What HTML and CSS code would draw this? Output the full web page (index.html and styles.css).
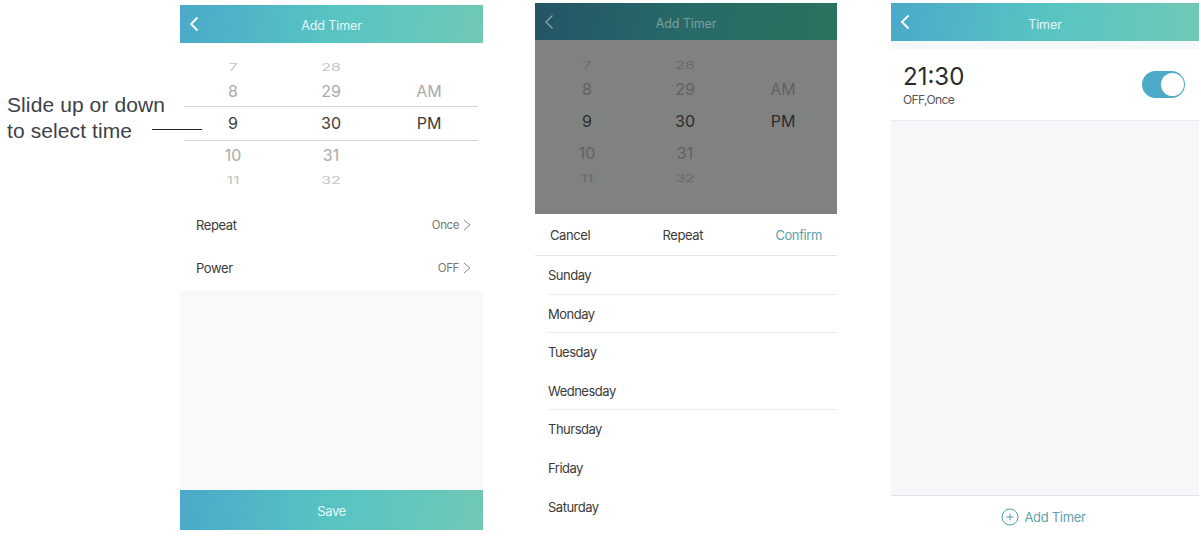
FILE: index.html
```html
<!DOCTYPE html>
<html lang="en">
<head>
  <meta charset="UTF-8">
  <meta name="viewport" content="width=device-width, initial-scale=1.0">
  <title>Timer</title>
  <link rel="stylesheet" href="styles.css">
</head>
<body>
  <div class="guide">
    <div class="note">
      <p class="note-text">Slide up or down<br>to select time</p>
      <span class="note-line"></span>
    </div>

    <!-- Add timer -->
    <div class="phone add">
      <div class="header">
        <svg class="back" viewBox="0 0 10 16"><path d="M8.5 1.5 L2 8 L8.5 14.5"/></svg>
        <span class="title">Add Timer</span>
      </div>
      <div class="picker">
        <div class="picker-row far"><span>7</span><span>28</span><span></span></div>
        <div class="picker-row"><span>8</span><span>29</span><span>AM</span></div>
        <div class="picker-row selected"><span>9</span><span>30</span><span>PM</span></div>
        <div class="picker-row"><span>10</span><span>31</span><span></span></div>
        <div class="picker-row far"><span>11</span><span>32</span><span></span></div>
      </div>
      <div class="setting">
        <span>Repeat</span>
        <span class="value">Once <svg class="next" viewBox="0 0 8 12"><path d="M1 1 L7 6 L1 11"/></svg></span>
      </div>
      <div class="setting">
        <span>Power</span>
        <span class="value">OFF <svg class="next" viewBox="0 0 8 12"><path d="M1 1 L7 6 L1 11"/></svg></span>
      </div>
      <div class="blank"></div>
      <div class="save">Save</div>
    </div>

    <!-- Repeat sheet -->
    <div class="phone repeat">
      <div class="header">
        <svg class="back" viewBox="0 0 10 16"><path d="M8.5 1.5 L2 8 L8.5 14.5"/></svg>
        <span class="title">Add Timer</span>
      </div>
      <div class="picker">
        <div class="picker-row far"><span>7</span><span>28</span><span></span></div>
        <div class="picker-row"><span>8</span><span>29</span><span>AM</span></div>
        <div class="picker-row selected"><span>9</span><span>30</span><span>PM</span></div>
        <div class="picker-row"><span>10</span><span>31</span><span></span></div>
        <div class="picker-row far"><span>11</span><span>32</span><span></span></div>
      </div>
      <div class="sheet-bar">
        <span>Cancel</span>
        <span>Repeat</span>
        <span class="confirm">Confirm</span>
      </div>
      <ul class="days">
        <li class="line">Sunday</li>
        <li class="line">Monday</li>
        <li>Tuesday</li>
        <li class="line">Wednesday</li>
        <li>Thursday</li>
        <li>Friday</li>
        <li>Saturday</li>
      </ul>
    </div>

    <!-- Timer list -->
    <div class="phone list">
      <div class="header">
        <svg class="back" viewBox="0 0 10 16"><path d="M8.5 1.5 L2 8 L8.5 14.5"/></svg>
        <span class="title">Timer</span>
      </div>
      <div class="timer">
        <div>
          <div class="time">21:30</div>
          <div class="detail">OFF,Once</div>
        </div>
        <div class="switch"><div class="knob"></div></div>
      </div>
      <div class="blank"></div>
      <div class="add-timer">
        <svg class="plus" viewBox="0 0 18 18"><circle cx="9" cy="9" r="8"/><path d="M9 5.5 V12.5 M5.5 9 H12.5"/></svg>
        <span>Add Timer</span>
      </div>
    </div>
  </div>
</body>
</html>
```
FILE: styles.css
```css
* {
  box-sizing: border-box;
}
body {
  margin: 0;
  background: #fff;
  font-family: Inter, Roboto, sans-serif;
  font-size: 13px;
  letter-spacing: -0.4px;
  color: #3a3a3a;
}
.guide {
  display: flex;
  align-items: flex-start;
  width: 1201px;
  height: 542px;
  overflow: hidden;
}
.note {
  display: flex;
  width: 180px;
  padding: 92px 0 0 7px;
}
.note-text {
  flex: none;
  width: 145px;
  margin: 0;
  font-family: "Liberation Sans", Arial, sans-serif;
  font-size: 21px;
  line-height: 26px;
  letter-spacing: 0.1px;
  color: #3d4248;
  white-space: nowrap;
}
.note-line {
  flex: none;
  width: 50px;
  height: 1px;
  margin-top: 37px;
  background: #222;
}
.phone {
  display: flex;
  flex-direction: column;
  flex: none;
}
.add {
  width: 303px;
  height: 525px;
  margin-top: 5px;
}
.repeat {
  width: 302px;
  margin: 3px 0 0 52px;
}
.list {
  width: 308px;
  height: 535px;
  margin: 3px 0 0 54px;
}
.header {
  display: flex;
  align-items: center;
  height: 38px;
  padding: 0 9px;
  background: linear-gradient(100deg, #4aa9c9, #57c4c3 50%, #70c8b5);
  color: #e6f7f7;
}
.title {
  flex: 1;
  margin-right: 10px;
  padding-top: 2px;
  text-align: center;
  font-size: 12.5px;
  letter-spacing: -0.1px;
}
.back {
  width: 10px;
  height: 16px;
  fill: none;
  stroke: #fff;
  stroke-width: 1.8;
}
.picker {
  height: 162px;
  padding: 14px 5px 0 4px;
}
.picker-row {
  display: grid;
  grid-template-columns: repeat(3, 98px);
  align-items: center;
  height: 29px;
  padding-bottom: 1px;
  text-align: center;
  font-size: 16px;
  letter-spacing: 0;
  color: #aaa;
}
.picker-row.far {
  height: 20px;
  color: #c4c4c4;
}
.picker-row.far span {
  transform: scaleY(0.65);
}
.picker-row.selected {
  height: 35px;
  border-top: 1px solid #d4d4d4;
  border-bottom: 1px solid #d4d4d4;
  color: #3c3c3c;
}
.setting {
  display: flex;
  justify-content: space-between;
  align-items: center;
  height: 43px;
  padding: 0 12px 3px 16px;
}
.value {
  display: flex;
  align-items: center;
  gap: 4px;
  font-size: 11.5px;
  color: #777;
}
.next {
  width: 8px;
  height: 12px;
  fill: none;
  stroke: #888;
}
.blank {
  flex: 1;
  background: #f8faf9;
}
.save {
  height: 40px;
  line-height: 42px;
  background: linear-gradient(100deg, #4aa9c9, #57c4c3 50%, #70c8b5);
  color: #e6f7f7;
  text-align: center;
}

/* picker screen dimmed behind the sheet */
.repeat .header {
  height: 37px;
  background: linear-gradient(100deg, #245467, #276a67 50%, #2b725f);
  color: #7f9d9b;
}
.repeat .title {
  padding-top: 4px;
}
.repeat .back {
  stroke: #8ea5a5;
  stroke-width: 1.3;
}
.repeat .picker {
  height: 174px;
  padding: 15px 5px 0 3px;
  background: #808281;
}
.repeat .picker-row {
  color: #606161;
}
.repeat .picker-row.far {
  color: #686969;
}
.repeat .picker-row.selected {
  border-color: transparent;
  color: #2c2c2c;
}
.sheet-bar {
  display: flex;
  justify-content: space-between;
  align-items: center;
  height: 42px;
  padding: 0 15px;
  border-bottom: 1px solid #e3e3e3;
}
.confirm {
  color: #5a9fa8;
}
.days {
  margin: 0;
  padding: 0 0 0 13px;
  list-style: none;
  letter-spacing: -0.5px;
}
.days li {
  height: 38.6px;
  line-height: 38px;
  border-bottom: 1px solid transparent;
}
.days .line {
  border-color: #ececec;
}

.list .title {
  padding-top: 4px;
}
.timer {
  display: flex;
  justify-content: space-between;
  align-items: center;
  height: 80px;
  padding: 0 14px 0 12px;
  border-top: 8px solid #f5f8f9;
  border-bottom: 1px solid #e9ecee;
}
.time {
  padding-top: 2px;
  font-size: 24px;
  line-height: 28px;
  color: #2b2b2b;
  letter-spacing: 0;
}
.detail {
  margin-top: 1px;
  font-size: 12px;
  line-height: 16px;
  color: #555;
  letter-spacing: -0.6px;
}
.switch {
  width: 43px;
  height: 27px;
  padding: 2px 1px;
  border-radius: 14px;
  background: #4caac6;
}
.knob {
  width: 23px;
  height: 23px;
  margin-left: auto;
  border-radius: 50%;
  background: #fff;
}
.list .blank {
  background: #f5f7f9;
}
.add-timer {
  display: flex;
  justify-content: center;
  align-items: center;
  gap: 5px;
  height: 43px;
  padding-right: 3px;
  border-top: 1px solid #dde3e8;
  color: #62a2ab;
  letter-spacing: -0.3px;
}
.plus {
  width: 18px;
  height: 18px;
  fill: none;
  stroke: #4f9fab;
}
```
